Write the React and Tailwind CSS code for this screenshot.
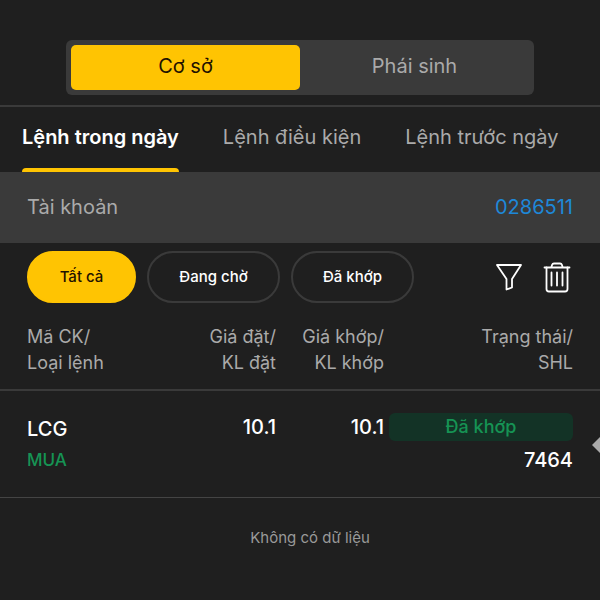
import { useState } from "react";
import clsx from "clsx";

const MARKETS = ["Cơ sở", "Phái sinh"];
const TABS = ["Lệnh trong ngày", "Lệnh điều kiện", "Lệnh trước ngày"];
const FILTERS = [
  { label: "Tất cả", width: "w-[109px]" },
  { label: "Đang chờ", width: "w-[133px]" },
  { label: "Đã khớp", width: "w-[123px]" },
];
const ORDERS = [
  { id: "7464", symbol: "LCG", side: "MUA", price: "10.1", matched: "10.1", status: "Đã khớp" },
];

const FunnelIcon = () => (
  <svg width="28" height="30" viewBox="0 0 28 30" fill="none" stroke="currentColor" strokeWidth="1.8" strokeLinejoin="round">
    <path d="M2 3H26L17 17V25.500L11.500 27.500V17Z" />
  </svg>
);

const TrashIcon = () => (
  <svg width="28" height="32" viewBox="0 0 28 32" fill="none" stroke="currentColor" strokeWidth="1.8" strokeLinecap="round" strokeLinejoin="round">
    <path d="M1.500 6.500H26.500" />
    <path d="M8.500 6L9 4Q9.500 2.500 11 2.500H17Q18.500 2.500 19 4L19.500 6" />
    <path d="M3.500 6.500V28Q3.500 30.500 6 30.500H22Q24.500 30.500 24.500 28V6.500" />
    <path d="M8.500 11.500V24.500M14 11.500V24.500M19.500 11.500V24.500" />
  </svg>
);

const MarketSwitch = () => {
  const [market, setMarket] = useState(MARKETS[0]);

  return (
    <div className="mx-[11%] flex rounded-md bg-[#3a3a3a] p-[5px]">
      {MARKETS.map((name) => (
        <button
          key={name}
          type="button"
          aria-pressed={market === name}
          onClick={() => setMarket(name)}
          className={clsx(
            "h-[45px] flex-1 rounded-[5px] pb-1 text-[20px]",
            market === name ? "bg-[#ffc402] text-[#1f1200]" : "text-[#aaaaaa]"
          )}
        >
          {name}
        </button>
      ))}
    </div>
  );
};

const OrderTabs = () => {
  const [tab, setTab] = useState(TABS[0]);

  return (
    <nav className="mt-[10px] flex gap-11 border-t-2 border-[#3a3a3a] px-[22px]">
      {TABS.map((name) => (
        <button
          key={name}
          type="button"
          onClick={() => setTab(name)}
          className={clsx(
            "flex h-[65px] flex-col justify-between whitespace-nowrap pt-4 text-[20px] leading-7",
            tab === name ? "font-semibold text-white" : "text-[#aaaaaa]"
          )}
        >
          {name}
          {tab === name && <span className="h-1 w-full rounded-t bg-[#ffc402]" />}
        </button>
      ))}
    </nav>
  );
};

const FilterBar = () => {
  const [filter, setFilter] = useState(FILTERS[0].label);

  return (
    <div className="flex items-center justify-between px-[27px] pt-2">
      <div className="flex gap-[11px]">
        {FILTERS.map(({ label, width }) => (
          <button
            key={label}
            type="button"
            aria-pressed={filter === label}
            onClick={() => setFilter(label)}
            className={clsx(
              "h-[52px] rounded-full border-2 text-[15px] font-medium",
              width,
              filter === label
                ? "border-[#ffc402] bg-[#ffc402] text-[#1f1200]"
                : "border-[#3a3a3a] text-white"
            )}
          >
            {label}
          </button>
        ))}
      </div>
      <div className="-mr-[2px] flex items-center gap-5 text-white">
        <button type="button" aria-label="Lọc">
          <FunnelIcon />
        </button>
        <button type="button" aria-label="Xóa" className="pr-1">
          <TrashIcon />
        </button>
      </div>
    </div>
  );
};

const OrderTable = () => (
  <table className="mt-[21px] w-full table-fixed">
    <thead>
      <tr className="border-b-2 border-[#3a3a3a] text-right align-top text-[18px] leading-[26px] text-[#aaaaaa]">
        <th className="w-[28%] pb-[13px] pl-[27px] text-left font-normal">Mã CK/<br />Loại lệnh</th>
        <th className="w-[18%] font-normal">Giá đặt/<br />KL đặt</th>
        <th className="w-[18%] font-normal">Giá khớp/<br />KL khớp</th>
        <th className="w-[36%] pr-[27px] font-normal">Trạng thái/<br />SHL</th>
      </tr>
    </thead>
    <tbody>
      {ORDERS.map((order) => (
        <tr key={order.id} className="border-b border-[#444444] text-right align-top text-[20px] leading-7 font-medium text-white">
          <td className="pt-6 pb-[23px] pl-[27px] text-left">
            <div>{order.symbol}</div>
            <div className="mt-[3px] text-[17px] text-[#169354]">{order.side}</div>
          </td>
          <td className="pt-[22px]">{order.price}</td>
          <td className="pt-[22px]">{order.matched}</td>
          <td className="relative pt-[22px] pr-[27px] pl-[5px]">
            <div className="rounded-md bg-[#133326] text-center text-[18px] text-[#169354]">{order.status}</div>
            <div className="mt-[5px]">{order.id}</div>
            <button type="button" aria-label="Mở thao tác" className="absolute top-[46px] right-0 text-[#aaaaaa]">
              <svg width="8" height="16" viewBox="0 0 8 16" fill="currentColor">
                <path d="M8 0V16L0 8Z" />
              </svg>
            </button>
          </td>
        </tr>
      ))}
    </tbody>
  </table>
);

const App = () => (
  <main className="min-h-screen bg-[#1f1f1f] pt-10 font-['Inter',sans-serif]">
    <MarketSwitch />
    <OrderTabs />
    <div className="flex h-[71px] items-center justify-between bg-[#3a3a3a] px-[27px] pb-0.5 text-[20px]">
      <span className="text-[#aaaaaa]">Tài khoản</span>
      <a href="#account" className="text-[#1e88d8]">0286511</a>
    </div>
    <FilterBar />
    <OrderTable />
    <p className="mt-[30px] pl-5 text-center text-[15px] leading-5 text-[#999999]">Không có dữ liệu</p>
  </main>
);

export default App;
